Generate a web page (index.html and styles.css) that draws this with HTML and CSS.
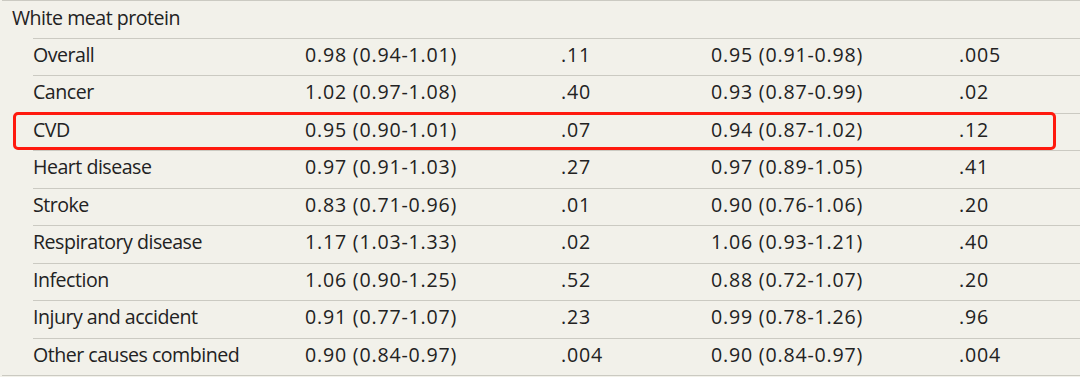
FILE: index.html
```html
<!DOCTYPE html>
<html>
<head>
<meta charset="utf-8">
<link rel="stylesheet" href="styles.css">
</head>
<body>
<div class="table">
  <div class="group-row">White meat protein</div>
  <div class="row"><span class="label">Overall</span><span>0.98 (0.94-1.01)</span><span>.11</span><span>0.95 (0.91-0.98)</span><span>.005</span></div>
  <div class="row"><span class="label">Cancer</span><span>1.02 (0.97-1.08)</span><span>.40</span><span>0.93 (0.87-0.99)</span><span>.02</span></div>
  <div class="row highlight"><span class="label">CVD</span><span>0.95 (0.90-1.01)</span><span>.07</span><span>0.94 (0.87-1.02)</span><span>.12</span></div>
  <div class="row"><span class="label">Heart disease</span><span>0.97 (0.91-1.03)</span><span>.27</span><span>0.97 (0.89-1.05)</span><span>.41</span></div>
  <div class="row"><span class="label">Stroke</span><span>0.83 (0.71-0.96)</span><span>.01</span><span>0.90 (0.76-1.06)</span><span>.20</span></div>
  <div class="row"><span class="label">Respiratory disease</span><span>1.17 (1.03-1.33)</span><span>.02</span><span>1.06 (0.93-1.21)</span><span>.40</span></div>
  <div class="row"><span class="label">Infection</span><span>1.06 (0.90-1.25)</span><span>.52</span><span>0.88 (0.72-1.07)</span><span>.20</span></div>
  <div class="row"><span class="label">Injury and accident</span><span>0.91 (0.77-1.07)</span><span>.23</span><span>0.99 (0.78-1.26)</span><span>.96</span></div>
  <div class="row"><span class="label">Other causes combined</span><span>0.90 (0.84-0.97)</span><span>.004</span><span>0.90 (0.84-0.97)</span><span>.004</span></div>
</div>
</body>
</html>
```
FILE: styles.css
```css
html, body {
  margin: 0;
  padding: 0;
  background: #f2f1ea;
}
body {
  font-family: "Open Sans", "Noto Sans", sans-serif;
  font-size: 19.6px;
  font-weight: 500;
  color: #222222;
}
.table {
  width: 1078px;
  margin-left: 2px;
  border-top: 1px solid #cbcac2;
  border-bottom: 1px solid #cbcac2;
}
.group-row {
  height: 36.5px;
  box-sizing: border-box;
  padding-left: 10px;
  line-height: 33px;
  letter-spacing: -0.5px;
}
.row {
  position: relative;
  margin-left: 31px;
  height: 37.5px;
  box-sizing: border-box;
  border-top: 1px solid #cbcac2;
  display: grid;
  grid-template-columns: 272px 256px 150px 248px 1fr;
  line-height: 32px;
  letter-spacing: 0.8px;
}
.row .label {
  letter-spacing: -0.5px;
}
.highlight::after {
  content: "";
  position: absolute;
  left: -20px;
  right: 24px;
  top: -1.5px;
  bottom: 0;
  border: 3px solid #ff1a0e;
  border-radius: 5px;
}
```
